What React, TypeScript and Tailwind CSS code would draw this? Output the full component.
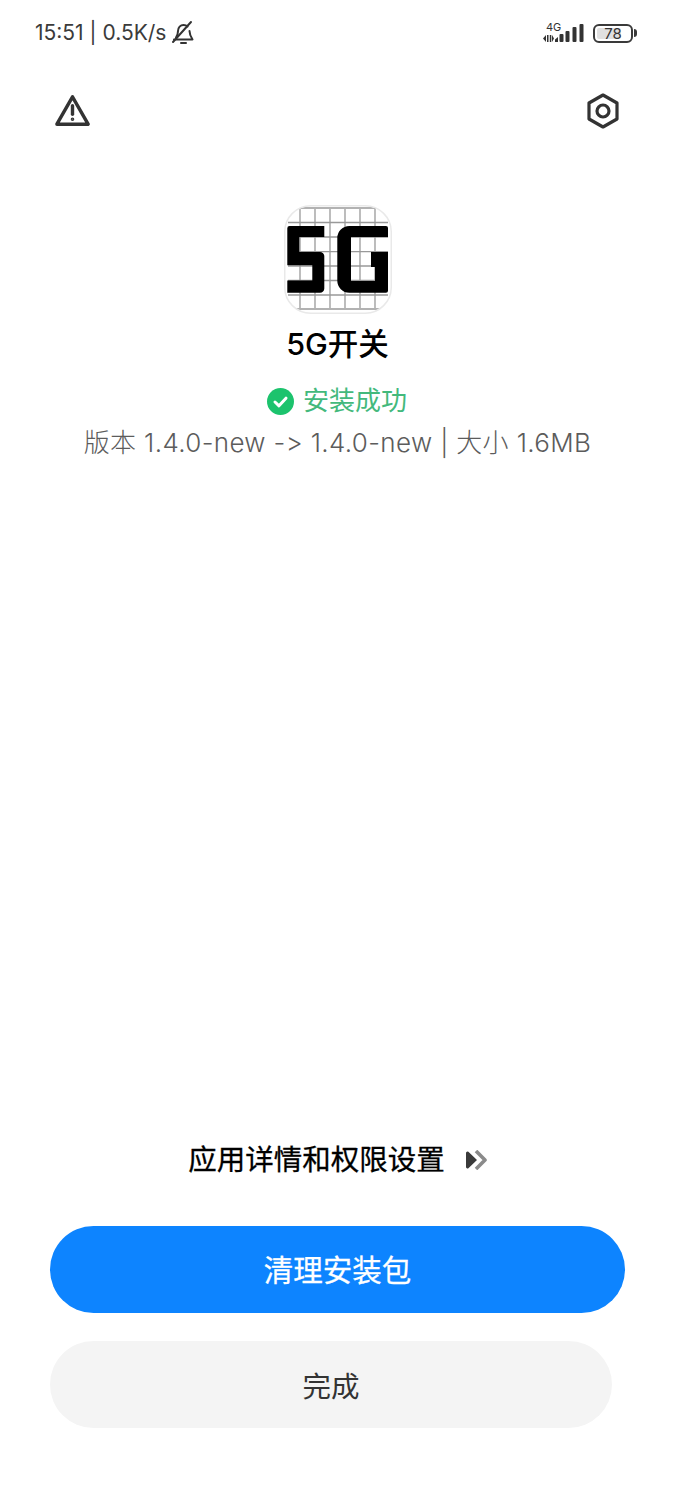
const font = "font-['Inter','Noto_Sans_CJK_SC',sans-serif]";

function SignalIcon() {
  return (
    <svg width="44" height="24" viewBox="0 0 44 24" fill="#333">
      <path d="M2 17.500l3-3.500v7zM6 14h1.500v7H6zM8.800 14h1.500v7H8.800zM11 14l2 3.500-2 3.500z" />
      <path d="M14 21v-2.500l3-2.500v5z" />
      <rect x="18.500" y="13" width="4" height="8" rx="1" />
      <rect x="24.500" y="10" width="4" height="11" rx="1" />
      <rect x="31.500" y="6" width="4" height="15" rx="1" />
      <rect x="38.500" y="3" width="4" height="18" rx="1" />
    </svg>
  );
}

function Logo() {
  const vs = [16, 31, 46, 61, 76, 91];
  const hs = [3, 17.5, 32, 46.7, 61, 75.5, 90, 104];
  return (
    <svg width="108" height="109" viewBox="0 0 108 109">
      <defs>
        <clipPath id="logo-clip">
          <rect x="1" y="1" width="106" height="107" rx="26" />
        </clipPath>
      </defs>
      <rect x="0.75" y="0.75" width="106.5" height="107.5" rx="26" fill="#fff" />
      <g clipPath="url(#logo-clip)">
        {vs.map((x) => (
          <line key={x} x1={x} y1="4" x2={x} y2="103" stroke="#999" strokeWidth="1.3" />
        ))}
        {hs.map((y) => (
          <line key={y} x1="4" y1={y} x2="104" y2={y} stroke="#999" strokeWidth="1.3" />
        ))}
      </g>
      <rect x="0.75" y="0.75" width="106.5" height="107.5" rx="26" fill="none" stroke="#e9e9e9" strokeWidth="1.5" />
      <path d="M5.500 21H40.300V32H15.300V47H36a4.300 4.300 0 0 1 4.300 4.300V83.500a4.300 4.300 0 0 1-4.300 4.300H3.300V75.500H28.300V60.300H3.300V23.200a2.200 2.200 0 0 1 2.200-2.200z" fill="#000" />
      <path d="M53.300 33a12 12 0 0 1 12-12H102a2 2 0 0 1 2 2V32H67V76H91V62H87V47H104V85.800a2 2 0 0 1-2 2H65.300a12 12 0 0 1-12-12z" fill="#000" />
    </svg>
  );
}

export default function App() {
  return (
    <div className={`${font} flex h-[1500px] w-[675px] flex-col bg-white`}>
      <div className="flex h-[66px] items-center justify-between pl-[35px] pr-[38px]">
        <div className="flex items-center gap-[5px] text-[21px] text-[#3b3b3b]">
          <span>15:51 | 0.5K/s</span>
          <svg width="24" height="26" viewBox="0 0 24 26" fill="none" stroke="#333" strokeWidth="2" strokeLinecap="round" strokeLinejoin="round">
            <path d="M5 17.500c1.500-2 2-3.500 2-6.500 0-3.500 2.500-6 5.500-6 1.500 0 3 .5 4 1.500M18.500 11c0 3 .5 4.500 3 8.500H3" />
            <path d="M2 22 20 2" />
            <path d="M10 23h5" />
          </svg>
        </div>
        <div className="flex items-center gap-[8px]">
          <div className="relative">
            <span className="absolute left-[5px] top-[1px] text-[11px] leading-none text-[#333]">4G</span>
            <SignalIcon />
          </div>
          <div className="flex items-center gap-[1px]">
            <div className="relative flex h-[19px] w-[40px] items-center justify-center overflow-hidden rounded-[6px] border-[2.5px] border-[#3a3a3a] text-[15px] leading-none text-[#333]">
              <div className="absolute inset-y-[2px] left-[2px] w-[24px] rounded-[2px] bg-[#e0e0e0]" />
              <span className="relative">78</span>
            </div>
            <div className="h-[8px] w-[3px] rounded-r-full bg-[#3a3a3a]" />
          </div>
        </div>
      </div>

      <div className="flex h-[90px] items-center justify-between pl-[55px] pr-[56px]">
        <svg className="-mt-[2px]" width="35" height="33" viewBox="0 0 37 34" fill="none" stroke="#333" strokeWidth="3.600" strokeLinejoin="round" strokeLinecap="round">
          <path d="M18.500 2.500 35 31.500H2z" />
          <path d="M18.500 12v9" />
          <circle cx="18.500" cy="26.300" r="0.600" fill="#333" strokeWidth="2.600" />
        </svg>
        <svg width="32" height="36" viewBox="0 0 32 36" fill="none" stroke="#333" strokeWidth="3.200" strokeLinejoin="round">
          <path d="M16 2 30 10v16l-14 8-14-8V10z" />
          <circle cx="16" cy="18" r="6" />
        </svg>
      </div>

      <div className="mt-[49px] flex flex-col items-center">
        <Logo />
        <div className="mt-[10px] text-[30.500px] font-medium leading-[40px] text-black">5G开关</div>
        <div className="mt-[19px] flex h-[36px] items-center gap-[9px] pr-[1px]">
          <svg width="27" height="27" viewBox="0 0 27 27">
            <circle cx="13.500" cy="13.500" r="13.500" fill="#1cc36d" />
            <path d="M8 14l4 3.800 7-7.600" fill="none" stroke="#fff" strokeWidth="3" strokeLinecap="round" strokeLinejoin="round" />
          </svg>
          <span className="text-[26px] leading-[36px] text-[#43b97c]">安装成功</span>
        </div>
        <div className="mt-[6px] whitespace-nowrap text-[26px] font-light leading-[36px] tracking-[0.35px] text-[#5c5c5c] [font-variant-ligatures:none]">版本 1.4.0-new -&gt; 1.4.0-new | 大小 1.6MB</div>
      </div>

      <div className="mt-auto flex flex-col px-[50px] pb-[72px]">
        <div className="mb-[46px] flex h-[40px] items-center justify-center gap-[20px] pl-[5px] pr-[5px]">
          <span className="text-[28.500px] leading-[40px] text-black [-webkit-text-stroke:0.3px_#000]">应用详情和权限设置</span>
          <svg width="22" height="20" viewBox="0 0 22 20">
            <path d="M1 3a1.500 1.500 0 0 1 2.400-1.200L12 10l-8.600 8.200A1.500 1.500 0 0 1 1 17z" fill="#3a3a3a" />
            <path d="M11 1l9 9-9 9" fill="none" stroke="#8a8a8a" strokeWidth="3.600" strokeLinejoin="round" />
          </svg>
        </div>
        <button className="h-[87px] w-[575px] rounded-full bg-[#0d84ff] pt-[2px] text-[29.500px] text-white [-webkit-text-stroke:0.3px_#fff]">清理安装包</button>
        <button className="mt-[28px] h-[87px] w-[562px] rounded-full bg-[#f4f4f4] pt-[5px] text-[28.500px] text-[#333]">完成</button>
      </div>
    </div>
  );
}
